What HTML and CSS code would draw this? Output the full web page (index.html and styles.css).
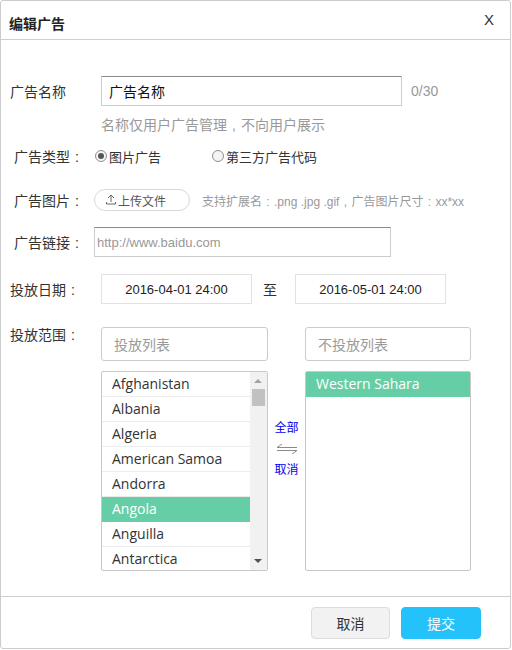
FILE: index.html
```html
<!DOCTYPE html>
<html lang="zh">
<head>
<meta charset="utf-8">
<title>编辑广告</title>
<link rel="stylesheet" href="styles.css">
</head>
<body>
<div class="dialog">
  <div class="dlg-header">
    <span class="dlg-title">编辑广告</span>
    <span class="dlg-close">X</span>
  </div>
  <div class="dlg-body">
    <div class="row row-name">
      <label class="lbl">广告名称</label>
      <div class="text-input name-input">广告名称</div>
      <span class="counter">0/30</span>
    </div>
    <div class="row row-hint">
      <span class="hint">名称仅用户广告管理<span class="p">,</span>不向用户展示</span>
    </div>
    <div class="row row-type">
      <label class="lbl lbl-short">广告类型<span class="p">:</span></label>
      <span class="radio checked"></span><span class="radio-text">图片广告</span>
      <span class="radio radio-second"></span><span class="radio-text">第三方广告代码</span>
    </div>
    <div class="row row-img">
      <label class="lbl lbl-short">广告图片<span class="p">:</span></label>
      <span class="upload-btn">
        <svg class="upload-icon" width="10" height="11" viewBox="0 0 10 11"><path d="M5 1 V8 M2 4 L5 1 L8 4 M0.5 8 V10 H9.5 V8" fill="none" stroke="#666" stroke-width="1"/></svg>上传文件
      </span>
      <span class="upload-hint">支持扩展名<span class="p sm">:</span>.png .jpg .gif<span class="p sm">,</span>广告图片尺寸<span class="p sm">:</span>xx*xx</span>
    </div>
    <div class="row row-link">
      <label class="lbl lbl-short">广告链接<span class="p">:</span></label>
      <div class="text-input link-input">http://www.baidu.com</div>
    </div>
    <div class="row row-date">
      <label class="lbl">投放日期<span class="p">:</span></label>
      <div class="date-box">2016-04-01 24:00</div>
      <span class="date-sep">至</span>
      <div class="date-box">2016-05-01 24:00</div>
    </div>
    <div class="row row-range">
      <label class="lbl lbl-top">投放范围<span class="p">:</span></label>
      <div class="dual">
        <div class="col">
          <div class="search">投放列表</div>
          <div class="listbox">
            <ul class="items">
              <li>Afghanistan</li>
              <li>Albania</li>
              <li>Algeria</li>
              <li>American Samoa</li>
              <li>Andorra</li>
              <li class="sel">Angola</li>
              <li>Anguilla</li>
              <li>Antarctica</li>
            </ul>
            <div class="scrollbar">
              <span class="sb-up"></span>
              <span class="sb-thumb"></span>
              <span class="sb-down"></span>
            </div>
          </div>
        </div>
        <div class="mid">
          <a class="mid-link">全部</a>
          <svg class="swap" width="22" height="12" viewBox="0 0 22 12"><path d="M6 1 L1 4.5 H21 M16 11 L21 7.5 H1" fill="none" stroke="#8a8a8a" stroke-width="1"/></svg>
          <a class="mid-link">取消</a>
        </div>
        <div class="col col-right">
          <div class="search">不投放列表</div>
          <div class="listbox">
            <ul class="items">
              <li class="sel">Western Sahara</li>
            </ul>
          </div>
        </div>
      </div>
    </div>
  </div>
  <div class="dlg-footer">
    <button class="btn btn-cancel">取消</button>
    <button class="btn btn-submit">提交</button>
  </div>
</div>
</body>
</html>
```

FILE: styles.css
```css
* { box-sizing: border-box; }
html, body { margin: 0; padding: 0; background: #fff; }
body {
  font-family: "Liberation Sans", "Noto Sans CJK SC", sans-serif;
  color: #333;
  font-size: 14px;
}
.p {
  display: inline-block;
  width: 14px;
  text-align: center;
  font-family: "Liberation Sans", sans-serif;
}
.p.sm { width: 12px; }
.dialog {
  width: 511px;
  height: 649px;
  border: 1px solid #cccccc;
  border-radius: 3px;
  display: flex;
  flex-direction: column;
  background: #fff;
}
.dlg-header {
  height: 39px;
  border-bottom: 1px solid #cfcfcf;
  display: flex;
  justify-content: space-between;
  padding: 0 0 0 8px;
}
.dlg-title {
  font-weight: bold;
  font-size: 14px;
  color: #222;
  line-height: 16px;
  margin-top: 15px;
}
.dlg-close {
  font-family: "Liberation Sans", sans-serif;
  font-size: 15px;
  color: #333;
  line-height: 16px;
  margin-top: 11px;
  margin-right: 16px;
}
.dlg-body {
  flex: 1;
  padding: 36px 0 0 9px;
}
.row { display: flex; align-items: center; }
.lbl {
  width: 91px;
  flex: none;
  font-size: 14px;
  color: #333;
}
.lbl-short { width: 84px; padding-left: 4px; }
.text-input {
  height: 30px;
  border: 1px solid #cccccc;
  border-top-color: #8a8a8a;
  display: flex;
  align-items: center;
}
.name-input {
  width: 301px;
  padding-left: 7px;
  font-size: 14px;
  color: #111;
}
.counter {
  margin-left: 9px;
  color: #999;
  font-size: 14px;
}
.row-hint { margin-top: 8px; height: 20px; padding-left: 91px; }
.hint { color: #999; font-size: 14px; }
.row-type { margin-top: 12px; height: 20px; }
.radio {
  width: 12px;
  height: 12px;
  border: 1px solid #8f8f8f;
  border-radius: 50%;
  background: #f4f4f4;
  margin-left: 1px;
  margin-right: 2px;
  position: relative;
  flex: none;
}
.radio.checked::after {
  content: "";
  position: absolute;
  left: 2px; top: 2px;
  width: 6px; height: 6px;
  border-radius: 50%;
  background: #555;
}
.radio-second { margin-left: 51px; }
.radio-text { font-size: 13px; color: #333; }
.row-img { margin-top: 23px; height: 22px; }
.upload-btn {
  width: 96px;
  height: 22px;
  border: 1px solid #d9d9d9;
  border-radius: 11px;
  display: flex;
  align-items: center;
  padding-left: 11px;
  font-size: 12px;
  color: #555;
}
.upload-icon { margin-right: 2px; margin-top: -1px; }
.upload-hint {
  margin-left: 12px;
  font-size: 12px;
  color: #999;
}
.row-link { margin-top: 16px; }
.link-input {
  width: 297px;
  padding-left: 2px;
  font-size: 13px;
  color: #999;
}
.row-date { margin-top: 17px; }
.date-box {
  width: 151px;
  height: 30px;
  border: 1px solid #e2e2e2;
  display: flex;
  align-items: center;
  justify-content: center;
  font-size: 13px;
  color: #222;
}
.date-sep { width: 43px; padding-left: 11px; font-size: 14px; color: #333; }
.row-range { margin-top: 23px; align-items: flex-start; }
.lbl-top { line-height: 16px; }
.dual { display: flex; align-items: center; }
.col { width: 167px; }
.col-right { width: 166px; }
.search {
  height: 34px;
  border: 1px solid #cccccc;
  border-radius: 3px;
  padding-left: 12px;
  display: flex;
  align-items: center;
  font-size: 14px;
  color: #9a9a9a;
}
.listbox {
  margin-top: 10px;
  height: 200px;
  border: 1px solid #c8c8c8;
  border-radius: 2px;
  display: flex;
  overflow: hidden;
}
.items {
  list-style: none;
  margin: 0;
  padding: 0;
  flex: 1;
  font-family: "Open Sans", "Noto Sans", sans-serif;
  font-size: 14px;
  color: #333;
}
.items li {
  height: 25px;
  line-height: 24px;
  padding-left: 10px;
  border-bottom: 1px solid #ececec;
  white-space: nowrap;
}
.items li.sel {
  background: #66cea6;
  color: #fff;
  border-bottom-color: #66cea6;
}
.scrollbar {
  width: 17px;
  flex: none;
  background: #f1f1f1;
  position: relative;
}
.sb-up {
  position: absolute;
  left: 4px; top: 7px;
  border-left: 4px solid transparent;
  border-right: 4px solid transparent;
  border-bottom: 4px solid #a3a3a3;
}
.sb-thumb {
  position: absolute;
  left: 2px; top: 17px;
  width: 13px; height: 17px;
  background: #c1c1c1;
}
.sb-down {
  position: absolute;
  left: 4px; bottom: 7px;
  border-left: 4px solid transparent;
  border-right: 4px solid transparent;
  border-top: 4px solid #505050;
}
.mid {
  width: 37px;
  display: flex;
  flex-direction: column;
  align-items: center;
}
.mid-link {
  font-size: 12px;
  line-height: 21px;
  color: #0000ee;
}
.swap { margin: 4px 0 5px; }
.dlg-footer {
  border-top: 1px solid #cfcfcf;
  padding: 10px 29px 9px 0;
  display: flex;
  justify-content: flex-end;
  gap: 11px;
}
.btn {
  height: 32px;
  width: 79px;
  border-radius: 4px;
  font-family: "Liberation Sans", "Noto Sans CJK SC", sans-serif;
  font-size: 14px;
  padding: 0;
}
.btn-cancel {
  background: #f2f2f2;
  border: 1px solid #dcdcdc;
  color: #333;
}
.btn-submit {
  width: 80px;
  background: #24c2fa;
  border: 1px solid #24c2fa;
  color: #fff;
}
```
